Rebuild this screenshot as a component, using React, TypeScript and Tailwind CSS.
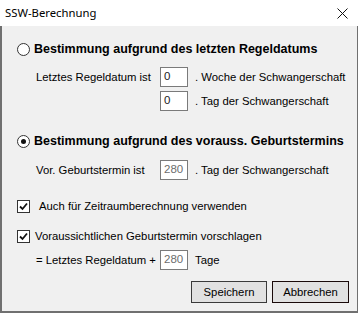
import type { ReactNode } from "react";

const ui = { fontFamily: '"Liberation Sans", Arial, sans-serif' };

function Radio({ checked }: { checked?: boolean }) {
  return (
    <span className="flex h-[13px] w-[13px] shrink-0 items-center justify-center rounded-full border border-[#333] bg-white">
      {checked && <span className="h-[5px] w-[5px] rounded-full bg-[#111]" />}
    </span>
  );
}

function Checkbox() {
  return (
    <span className="flex h-[13px] w-[13px] shrink-0 items-center justify-center border border-[#333] bg-white">
      <svg width="9" height="9" viewBox="0 0 9 9" aria-hidden>
        <path d="M1 4.5 L3.5 7 L8 1.5" fill="none" stroke="#111" strokeWidth="1.8" />
      </svg>
    </span>
  );
}

function Field({ value, muted }: { value: string; muted?: boolean }) {
  return (
    <span
      className={`flex h-[20px] w-[28px] shrink-0 items-center border border-[#7a7a7a] bg-white pl-[3px] text-[11.5px] ${
        muted ? "text-[#6d6d6d]" : "text-[#222]"
      }`}
    >
      {value}
    </span>
  );
}

function InputRow({ label, children }: { label?: string; children: ReactNode }) {
  return (
    <div className="flex items-center pl-[34px]">
      <span className="w-[124px] shrink-0 whitespace-nowrap text-[11.3px]">{label}</span>
      {children}
    </div>
  );
}

export default function App() {
  return (
    <div className="h-[313px] w-[358px] overflow-hidden text-black" style={ui}>
      <div className="flex h-[26px] items-center justify-between bg-white pl-[5px] pr-[10px]">
        <span className="text-[11.3px]" style={{ fontFamily: '"Noto Sans", sans-serif' }}>
          SSW-Berechnung
        </span>
        <svg width="11" height="11" viewBox="0 0 11 11" aria-hidden>
          <path d="M0.5 0.5 L10.5 10.5 M10.5 0.5 L0.5 10.5" stroke="#111" strokeWidth="1" />
        </svg>
      </div>

      <div className="flex h-[287px] flex-col border-b-2 border-l-2 border-r border-[#707070] bg-[#f0f0f0] pt-[16px]">
        <div className="flex h-[14px] items-center gap-[4px] pl-[15px]">
          <Radio />
          <span className="whitespace-nowrap text-[12.5px] font-bold">
            Bestimmung aufgrund des letzten Regeldatums
          </span>
        </div>

        <div className="mt-[11px]">
          <InputRow label="Letztes Regeldatum ist">
            <Field value="0" />
            <span className="whitespace-nowrap pl-[7px] text-[11.3px]">. Woche der Schwangerschaft</span>
          </InputRow>
        </div>
        <div className="mt-[4px]">
          <InputRow>
            <Field value="0" />
            <span className="whitespace-nowrap pl-[7px] text-[11.3px]">. Tag der Schwangerschaft</span>
          </InputRow>
        </div>

        <div className="mt-[23px] flex h-[14px] items-center gap-[4px] pl-[15px]">
          <Radio checked />
          <span className="whitespace-nowrap text-[12.5px] font-bold">
            Bestimmung aufgrund des vorauss. Geburtstermins
          </span>
        </div>

        <div className="mt-[12px]">
          <InputRow label="Vor. Geburtstermin ist">
            <Field value="280" muted />
            <span className="whitespace-nowrap pl-[7px] text-[11.3px]">. Tag der Schwangerschaft</span>
          </InputRow>
        </div>

        <div className="mt-[19px] flex h-[14px] items-center gap-[9px] pl-[15px]">
          <Checkbox />
          <span className="whitespace-nowrap text-[11.3px]">Auch für Zeitraumberechnung verwenden</span>
        </div>

        <div className="mt-[16px] flex h-[14px] items-center gap-[5px] pl-[15px]">
          <Checkbox />
          <span className="whitespace-nowrap text-[11.3px]">Voraussichtlichen Geburtstermin vorschlagen</span>
        </div>

        <div className="mt-[7px]">
          <InputRow label="= Letztes Regeldatum +">
            <Field value="280" muted />
            <span className="whitespace-nowrap pl-[7px] text-[11.3px]">Tage</span>
          </InputRow>
        </div>

        <div className="mt-[11px] flex justify-end gap-[5px] pr-[8px]">
          <button className="h-[22px] w-[76px] border border-[#3a3a3a] bg-[#e1e1e1] text-[11.3px]">
            Speichern
          </button>
          <button className="h-[22px] w-[77px] border border-[#1a0a0a] bg-[#e1e1e1] text-[11.3px]">
            Abbrechen
          </button>
        </div>
      </div>
    </div>
  );
}
